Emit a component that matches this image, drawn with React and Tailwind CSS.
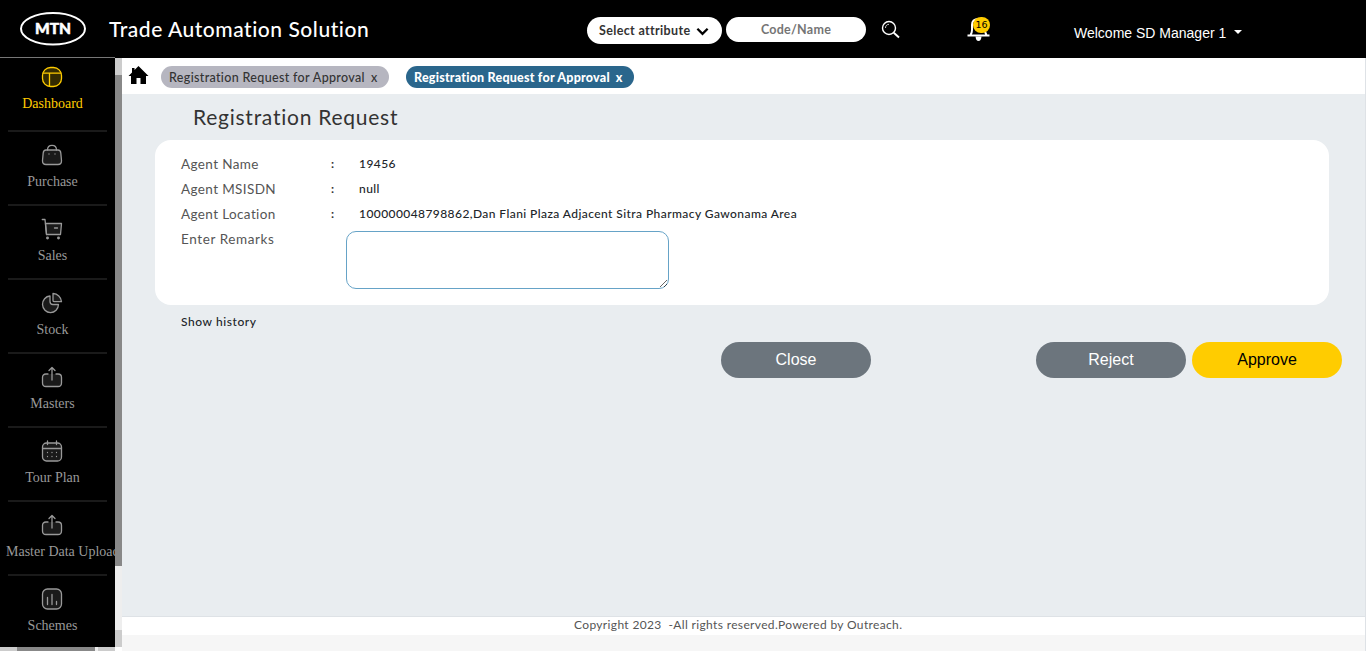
import React from "react";

const brand = "font-['Lato',sans-serif]";

function Svg({ children }) {
  return (
    <svg className="-ml-px shrink-0" width="22" height="22" viewBox="0 0 22 22" fill="none" stroke="currentColor" strokeWidth="1.3" strokeLinecap="round" strokeLinejoin="round">
      {children}
    </svg>
  );
}

const upload = (
  <Svg>
    <path d="M7 8H5Q1.500 8 1.500 11.500V17Q1.500 20.500 5 20.500H17Q20.500 20.500 20.500 17V11.500Q20.500 8 17 8H15" fill="#1a1a1a" />
    <path d="M11 14V2M8 4.500L11 1.500L14 4.500" />
  </Svg>
);

const items = [
  {
    label: "Dashboard",
    icon: (
      <Svg>
        <rect x="1.500" y="1.500" width="19" height="19" rx="8" fill="#332a00" />
        <path d="M2 7.200H20M8.500 7.500V20" />
      </Svg>
    ),
  },
  {
    label: "Purchase",
    icon: (
      <Svg>
        <path d="M5 6H17Q19.500 6 19.800 9L20.500 16.500Q20.700 20.500 17 20.500H5Q1.300 20.500 1.500 16.500L2.200 9Q2.500 6 5 6Z" fill="#1a1a1a" />
        <path d="M6.500 6Q6.500 1.300 11 1.300T15.500 6M8 10V10.100M14 10V10.100" />
      </Svg>
    ),
  },
  {
    label: "Sales",
    icon: (
      <Svg>
        <path d="M4.500 5.500H20.500L19.500 16.500H5.500Z" fill="#1a1a1a" />
        <path d="M1.300 1.500H4L5.500 16.500M13.500 10H16.500" />
        <circle cx="6.500" cy="20" r=".8" fill="currentColor" />
        <circle cx="17.500" cy="20" r=".8" fill="currentColor" />
      </Svg>
    ),
  },
  {
    label: "Stock",
    icon: (
      <Svg>
        <path d="M9 4V9.500Q9 12.500 12 12.500H17.500A8 8.300 0 1 1 9 4Z" fill="#1a1a1a" />
        <path d="M12 1.500A8.800 8.800 0 0 1 20.500 9.700H13.300Q12 9.700 12 8.400Z" fill="#1a1a1a" />
      </Svg>
    ),
  },
  { label: "Masters", icon: upload },
  {
    label: "Tour Plan",
    icon: (
      <Svg>
        <rect x="1.500" y="3" width="19" height="18" rx="4" fill="#1a1a1a" />
        <path d="M2 8.500H20M6.500 1V4.500M15.500 1V4.500M6.500 12.500V12.600M11 12.500V12.600M15.500 12.500V12.600M6.500 16.500V16.600M11 16.500V16.600M15.500 16.500V16.600" />
      </Svg>
    ),
  },
  { label: "Master Data Upload", icon: upload, wide: true },
  {
    label: "Schemes",
    icon: (
      <Svg>
        <rect x="1.500" y="1" width="19" height="20" rx="5" fill="#1a1a1a" />
        <path d="M6.500 9.500V16.500M11 6.500V16.500M15.500 13.500V16.500" />
      </Svg>
    ),
  },
];

function Header() {
  return (
    <header className="flex h-[58px] shrink-0 items-start whitespace-nowrap bg-black text-white">
      <svg className="ml-[19px] mt-[11px] h-[36px] w-[68px] shrink-0" viewBox="0 0 68 36">
        <ellipse cx="34" cy="17.800" rx="32" ry="15.700" fill="none" stroke="#fff" strokeWidth="2" />
        <text x="34" y="23" textAnchor="middle" fill="#fff" stroke="#fff" strokeWidth=".5" fontFamily="Lato, sans-serif" fontWeight="900" fontSize="15.500">MTN</text>
      </svg>
      <h1 className="ml-[22px] mt-[15px] w-[478px] text-[21px] font-medium leading-7 tracking-[0.530px]">Trade Automation Solution</h1>
      <button className="mt-[17px] flex h-[27px] w-[135px] items-center justify-between rounded-full bg-white pl-3 pr-[13px] pt-[2px] text-[12.500px] font-bold tracking-[0.350px] text-[#333]">
        <span>Select attribute</span>
        <svg width="13" height="9" viewBox="0 0 14 9" fill="none" stroke="#000" strokeWidth="2.500"><path d="M1.500 1.500L7 7L12.500 1.500" /></svg>
      </button>
      <div className="ml-1 mt-[17px] flex h-[25px] w-[140px] items-center justify-center rounded-full bg-white pt-px text-[12.500px] font-bold tracking-[0.250px] text-[#757575]">Code/Name</div>
      <svg className="ml-[15px] mt-5 h-[20px] w-[20px] shrink-0" viewBox="0 0 20 20" fill="none" stroke="#fff" strokeWidth="1.400">
        <circle cx="8" cy="8" r="6.500" />
        <path d="M4.500 8A3.500 3.500 0 0 1 8 4.300" strokeWidth=".8" />
        <path d="M12.800 12.800L18 17.500" strokeWidth="1.900" />
      </svg>
      <div className="relative ml-[65px] mt-4 h-[26px] w-[25px] shrink-0">
        <svg width="25" height="26" viewBox="0 0 25 26" fill="none" stroke="#fff" strokeWidth="2">
          <path d="M1.500 19.500H23.500M4.500 19Q6 17 6 14V9Q6 3 12.500 3T19 9V14Q19 17 20.500 19" />
          <path d="M9.500 20.500H15.500Q15 25 12.500 25T9.500 20.500Z" fill="#fff" stroke="none" />
        </svg>
        <span className="absolute left-[7px] top-[1px] flex h-4 w-[17px] items-center justify-center rounded-full bg-[#fc0] font-['DejaVu_Sans',sans-serif] text-[9.500px] leading-4 text-black">16</span>
      </div>
      <div className="ml-[83px] mt-[23px] flex items-center gap-2 font-['Liberation_Sans',sans-serif] text-[14px] leading-5">
        Welcome SD Manager 1
        <svg width="8" height="4" viewBox="0 0 8 4" className="-mt-0.5"><path d="M0 0H8L4 4Z" fill="#fff" /></svg>
      </div>
    </header>
  );
}

function Sidebar() {
  return (
    <div className="flex w-[122px] shrink-0 flex-col">
      <div className="flex h-[589px]">
        <nav className="-mt-px w-[115px] overflow-hidden border-t border-[#777] bg-black font-['Liberation_Serif',serif] text-[14px] text-[#999]">
          {items.map((it, i) => (
            <div
              key={it.label}
              className={
                i === 0
                  ? "mx-2 flex h-[74px] w-[99px] flex-col items-center border-b-2 border-[#1a1a1a] pr-[10px] pt-2 text-[#fc0]"
                  : "mx-2 flex h-[74px] w-[99px] flex-col items-center border-b-2 border-[#1a1a1a] pr-[10px] pt-3"
              }
            >
              {it.icon}
              <span className={it.wide ? "-ml-0.5 mt-[7px] self-start whitespace-nowrap leading-[18px]" : "mt-[7px] whitespace-nowrap leading-[18px]"}>{it.label}</span>
            </div>
          ))}
        </nav>
        <div className="flex w-[7px] flex-col bg-[#eee]">
          <div className="h-[17px] bg-[#ccc]" />
          <div className="h-[491px] bg-[#888]" />
          <div className="flex-1" />
          <div className="h-[17px] bg-[#ccc]" />
        </div>
      </div>
      <div className="flex h-1 w-[115px] bg-[#eee]">
        <div className="w-[17px] bg-[#ccc]" />
        <div className="w-[78px] bg-[#888]" />
        <div className="w-[3px]" />
        <div className="w-[17px] bg-[#ccc]" />
      </div>
    </div>
  );
}

const rows = [
  ["Agent Name", "19456"],
  ["Agent MSISDN", "null"],
  ["Agent Location", "100000048798862,Dan Flani Plaza Adjacent Sitra Pharmacy Gawonama Area"],
];

function Content() {
  return (
    <div className="flex flex-1 flex-col whitespace-nowrap border-r border-[#dee2e6]">
      <div className="flex h-9 items-center bg-white pt-0.5 text-[12.500px] leading-[22px] text-[#333]">
        <svg className="-mt-1 ml-[6px] mr-3 h-[20px] w-[21px]" viewBox="0 0 21 20"><path d="M10.500 1L20.500 11H18V19H12.500V13H8.500V19H3V11H.5L4 7.500V3H6.500V5Z" /></svg>
        <div className="flex h-[22px] w-[228px] items-center gap-[6px] rounded-full bg-[#b6b6c0] pl-2 pt-px font-medium tracking-[0.340px]">
          <span>Registration Request for Approval</span><span>x</span>
        </div>
        <div className="ml-[17px] flex h-[22px] w-[228px] items-center gap-[6px] rounded-full bg-[#2a668c] pl-2 pt-px font-black tracking-[0.220px] text-white">
          <span>Registration Request for Approval</span><span>x</span>
        </div>
      </div>
      <main className="flex h-[522px] flex-col bg-[#e9edf0]">
        <h2 className="ml-[71px] mt-2 h-[38px] text-[21px] leading-[30px] tracking-[0.750px] text-[#333]">Registration Request</h2>
        <section className="ml-[33px] h-[165px] w-[1174px] rounded-[16px] bg-white pl-[26px] pt-3">
          {rows.map(([k, v]) => (
            <div key={k} className="flex h-[25px] items-center">
              <span className="w-[150px] text-[13.500px] tracking-[0.380px] text-[#555]">{k}</span>
              <span className="w-7 pb-px text-[12px] font-bold text-[#333]">:</span>
              <span className="pb-0.5 text-[12px] font-medium tracking-[0.425px] text-[#212529]">{v}</span>
            </div>
          ))}
          <div className="flex">
            <span className="w-[165px] text-[13.500px] leading-[25px] tracking-[0.600px] text-[#555]">Enter Remarks</span>
            <textarea className="mt-1 h-[58px] w-[323px] rounded-[10px] border border-[#66a3c7] bg-white" />
          </div>
        </section>
        <div className="ml-[59px] mt-2 text-[12px] font-medium leading-[18px] tracking-[0.570px] text-[#212529]">Show history</div>
        <div className="ml-[599px] mt-[11px] flex font-['Liberation_Sans',sans-serif] text-[16px] text-white">
          <button className="h-9 w-[150px] rounded-full bg-[#6c757d] pb-px">Close</button>
          <button className="ml-[165px] h-9 w-[150px] rounded-full bg-[#6c757d] pb-px">Reject</button>
          <button className="ml-[6px] h-9 w-[150px] rounded-full bg-[#fc0] pb-px text-black">Approve</button>
        </div>
      </main>
      <footer className="h-[19px] border-t border-[#dee2e6] bg-white pl-[452px] text-[12px] leading-4 tracking-[0.350px] text-[#555]">
        <span className="whitespace-pre">Copyright 2023  -All rights reserved.Powered by Outreach.</span>
      </footer>
      <div className="flex-1 bg-[#f6f6f6]" />
    </div>
  );
}

export default function App() {
  return (
    <div className={`${brand} flex h-[651px] w-[1366px] flex-col overflow-hidden bg-white`}>
      <Header />
      <div className="flex flex-1">
        <Sidebar />
        <Content />
      </div>
    </div>
  );
}
